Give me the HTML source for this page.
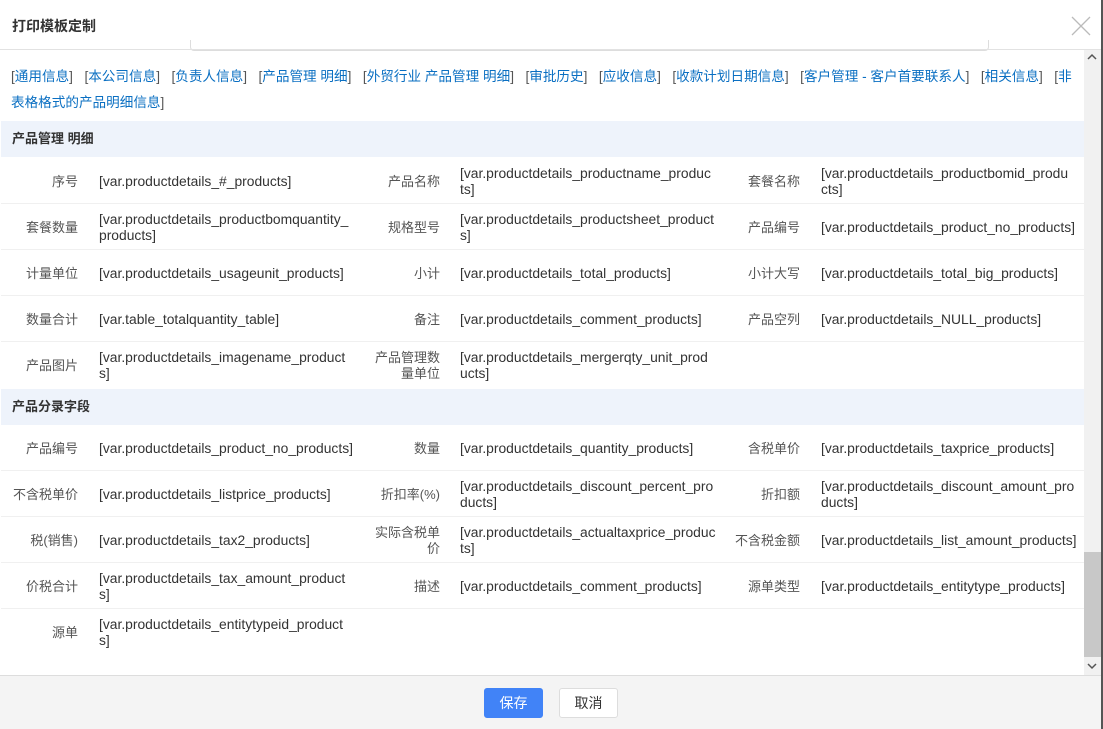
<!DOCTYPE html>
<html><head><meta charset="utf-8"><style>
*{margin:0;padding:0;box-sizing:border-box}
body{width:1103px;height:729px;overflow:hidden;background:#fff;font-family:"Liberation Sans","Noto Sans CJK SC",sans-serif;font-size:13px;color:#333;position:relative}
.abs{position:absolute}
.title{left:12px;top:16px;font-size:14px;font-weight:bold;color:#333}
.hdrline{left:0;top:49px;width:1101px;height:1px;background:#e2e2e2}
.search{left:190px;top:40px;width:799px;height:11px;border:1px solid #ddd;border-top:none;border-radius:0 0 4px 4px}
.links{left:11px;top:64px;width:1070px;line-height:26px;color:#0a6fc2;font-size:13.6px;white-space:nowrap}
.links span{color:#555}
.links i{display:inline-block;width:11.5px}
.sec{left:1px;width:1083px;height:36px;background:#eef3fb;font-weight:bold;color:#333;padding-left:11px;line-height:36px}
.row{left:1px;width:1083px;height:46px;border-bottom:1px solid #f0f0f0}
.l,.v{position:absolute;white-space:nowrap;line-height:16px}
.l{text-align:right;color:#555;width:120px}
.v{color:#333;font-size:13.85px;margin-top:-1px}
.sb{left:1084px;top:50px;width:17px;height:625px;background:#f1f1f1}
.thumb{left:1084px;top:552px;width:17px;height:105px;background:#c8c8c8}
.edge{left:1101px;top:0;width:2px;height:729px;background:#555}
.footer{left:0;top:675px;width:1101px;height:54px;background:#f4f4f4;border-top:1px solid #ddd}
.btn{top:688px;height:30px;width:59px;border-radius:3px;text-align:center;line-height:28px;font-size:14px}
</style></head><body>
<div class="abs title">打印模板定制</div>
<svg class="abs" style="left:1071px;top:16px" width="20" height="20"><path d="M1 1L19 19M19 1L1 19" stroke="#bbb" stroke-width="1.3"/></svg>
<div class="abs search"></div>
<div class="abs hdrline"></div>
<div class="abs links"><span>[</span>通用信息<span>]</span><i></i><span>[</span>本公司信息<span>]</span><i></i><span>[</span>负责人信息<span>]</span><i></i><span>[</span>产品管理 明细<span>]</span><i></i><span>[</span>外贸行业 产品管理 明细<span>]</span><i></i><span>[</span>审批历史<span>]</span><i></i><span>[</span>应收信息<span>]</span><i></i><span>[</span>收款计划日期信息<span>]</span><i></i><span>[</span>客户管理 - 客户首要联系人<span>]</span><i></i><span>[</span>相关信息<span>]</span><i></i><span>[</span>非<br>表格格式的产品明细信息<span>]</span></div>

<div class="abs sec" style="top:121px">产品管理 明细</div>
<div class="abs sec" style="top:389px">产品分录字段</div>

<div class="abs sb"></div>
<div class="abs thumb"></div>
<svg class="abs" style="left:1087px;top:53px" width="10" height="8"><path d="M1 6L5 2L9 6" stroke="#555" stroke-width="1.5" fill="none"/></svg>
<svg class="abs" style="left:1087px;top:662px" width="10" height="8"><path d="M1 2L5 6L9 2" stroke="#555" stroke-width="1.5" fill="none"/></svg>

<div class="abs footer"></div>
<div class="abs btn" style="left:484px;background:#4183f7;color:#fff;border:1px solid #4183f7">保存</div>
<div class="abs btn" style="left:559px;background:#fff;color:#333;border:1px solid #ddd">取消</div>
<div class="abs edge"></div>

<div class="abs row" style="top:158px"></div>
<div class="abs row" style="top:204px"></div>
<div class="abs row" style="top:250px"></div>
<div class="abs row" style="top:296px"></div>
<div class="abs row" style="top:342px;border:none;height:47px"></div>
<div class="abs row" style="top:425px"></div>
<div class="abs row" style="top:471px"></div>
<div class="abs row" style="top:517px"></div>
<div class="abs row" style="top:563px"></div>

<div class="l" style="left:-42px;top:174px">序号</div><div class="v" style="left:99px;top:174px">[var.productdetails_#_products]</div>
<div class="l" style="left:320px;top:174px">产品名称</div><div class="v" style="left:460px;top:166px">[var.productdetails_productname_produc<br>ts]</div>
<div class="l" style="left:680px;top:174px">套餐名称</div><div class="v" style="left:821px;top:166px">[var.productdetails_productbomid_produ<br>cts]</div>

<div class="l" style="left:-42px;top:220px">套餐数量</div><div class="v" style="left:99px;top:212px">[var.productdetails_productbomquantity_<br>products]</div>
<div class="l" style="left:320px;top:220px">规格型号</div><div class="v" style="left:460px;top:212px">[var.productdetails_productsheet_product<br>s]</div>
<div class="l" style="left:680px;top:220px">产品编号</div><div class="v" style="left:821px;top:220px">[var.productdetails_product_no_products]</div>

<div class="l" style="left:-42px;top:266px">计量单位</div><div class="v" style="left:99px;top:266px">[var.productdetails_usageunit_products]</div>
<div class="l" style="left:320px;top:266px">小计</div><div class="v" style="left:460px;top:266px">[var.productdetails_total_products]</div>
<div class="l" style="left:680px;top:266px">小计大写</div><div class="v" style="left:821px;top:266px">[var.productdetails_total_big_products]</div>

<div class="l" style="left:-42px;top:312px">数量合计</div><div class="v" style="left:99px;top:312px">[var.table_totalquantity_table]</div>
<div class="l" style="left:320px;top:312px">备注</div><div class="v" style="left:460px;top:312px">[var.productdetails_comment_products]</div>
<div class="l" style="left:680px;top:312px">产品空列</div><div class="v" style="left:821px;top:312px">[var.productdetails_NULL_products]</div>

<div class="l" style="left:-42px;top:358px">产品图片</div><div class="v" style="left:99px;top:350px">[var.productdetails_imagename_product<br>s]</div>
<div class="l" style="left:320px;top:350px">产品管理数<br>量单位</div><div class="v" style="left:460px;top:350px">[var.productdetails_mergerqty_unit_prod<br>ucts]</div>

<div class="l" style="left:-42px;top:441px">产品编号</div><div class="v" style="left:99px;top:441px">[var.productdetails_product_no_products]</div>
<div class="l" style="left:320px;top:441px">数量</div><div class="v" style="left:460px;top:441px">[var.productdetails_quantity_products]</div>
<div class="l" style="left:680px;top:441px">含税单价</div><div class="v" style="left:821px;top:441px">[var.productdetails_taxprice_products]</div>

<div class="l" style="left:-42px;top:487px">不含税单价</div><div class="v" style="left:99px;top:487px">[var.productdetails_listprice_products]</div>
<div class="l" style="left:320px;top:487px">折扣率(%)</div><div class="v" style="left:460px;top:479px">[var.productdetails_discount_percent_pro<br>ducts]</div>
<div class="l" style="left:680px;top:487px">折扣额</div><div class="v" style="left:821px;top:479px">[var.productdetails_discount_amount_pro<br>ducts]</div>

<div class="l" style="left:-42px;top:533px">税(销售)</div><div class="v" style="left:99px;top:533px">[var.productdetails_tax2_products]</div>
<div class="l" style="left:320px;top:525px">实际含税单<br>价</div><div class="v" style="left:460px;top:525px">[var.productdetails_actualtaxprice_produc<br>ts]</div>
<div class="l" style="left:680px;top:533px">不含税金额</div><div class="v" style="left:821px;top:533px">[var.productdetails_list_amount_products]</div>

<div class="l" style="left:-42px;top:579px">价税合计</div><div class="v" style="left:99px;top:571px">[var.productdetails_tax_amount_product<br>s]</div>
<div class="l" style="left:320px;top:579px">描述</div><div class="v" style="left:460px;top:579px">[var.productdetails_comment_products]</div>
<div class="l" style="left:680px;top:579px">源单类型</div><div class="v" style="left:821px;top:579px">[var.productdetails_entitytype_products]</div>

<div class="l" style="left:-42px;top:625px">源单</div><div class="v" style="left:99px;top:617px">[var.productdetails_entitytypeid_product<br>s]</div>
</body></html>
